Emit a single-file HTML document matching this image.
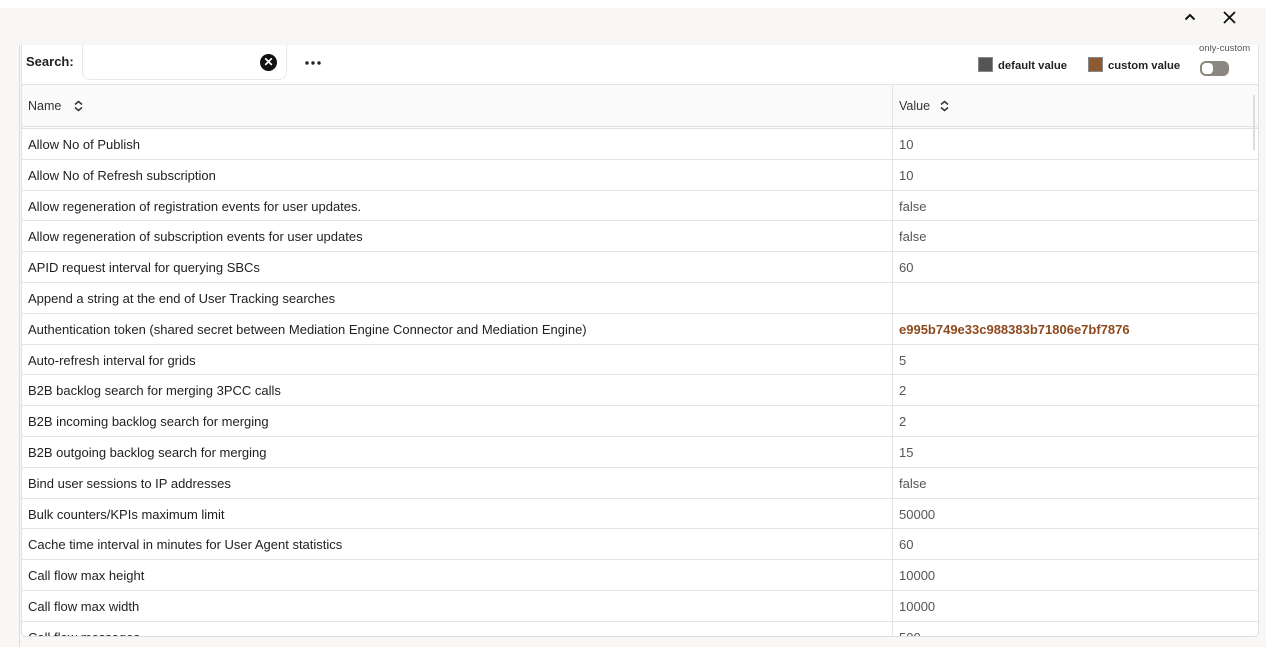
<!DOCTYPE html>
<html><head><meta charset="utf-8"><style>
*{box-sizing:border-box;margin:0;padding:0}
body{width:1273px;height:647px;background:#fff;font-family:"Liberation Sans",Arial,sans-serif;position:relative;overflow:hidden}
.top{position:absolute;left:0;top:8px;width:1266px;height:639px;background:#f8f7f5}
.lline{position:absolute;left:19px;top:45px;width:1px;height:602px;background:#ddd}
.panel{position:absolute;left:21px;top:45px;width:1238px;height:592px;background:#fff;border:1px solid #e0e0e0;border-top:none;border-radius:0 0 5px 5px;overflow:hidden}
.bar{height:40px;position:relative;border-bottom:1px solid #e4e4e4}
.slabel{position:absolute;left:4px;top:9px;font-weight:bold;font-size:13px;color:#222}
.sbox{position:absolute;left:60px;top:0;width:205px;height:35px;border:1px solid #e8e8e8;border-top:none;border-radius:0 0 8px 8px}
.clr{position:absolute;left:238px;top:9px;width:17px;height:17px;border-radius:50%;background:#111;color:#fff;font-size:12px;line-height:17px;text-align:center;font-weight:bold}
.dots{position:absolute;left:283px;top:16px}
.leg{position:absolute;top:12px;font-size:11.3px;font-weight:bold;color:#222}
.sq{display:inline-block;width:15px;height:15px;vertical-align:-3px;margin-right:5px;border:1px solid #888}
.oc{position:absolute;left:1177px;top:-2px;font-size:9.5px;color:#555}
.tog{position:absolute;left:1178px;top:16px;width:29px;height:15px;border-radius:6px;background:#8b8680}
.tog:after{content:"";position:absolute;left:2px;top:2px;width:11px;height:11px;border-radius:4px;background:#fff}
.hdr{height:44px;background:#fafafa;border-bottom:3px double #e0e0e0;position:relative;font-size:12.5px;color:#333}
.hdr span{position:absolute;top:14px}
.hdr svg{position:absolute;top:15px}
.row{height:30.8px;border-bottom:1px solid #e4e4e4;position:relative;font-size:13px;color:#222}
.row .n{position:absolute;left:6px;top:8px}
.row .v{position:absolute;left:877px;top:8px;color:#555}
.div{position:absolute;left:870px;top:40px;width:1px;height:560px;background:#e4e4e4}
</style></head><body>
<div class="top"></div>
<svg style="position:absolute;left:1184px;top:13px" width="12" height="8" viewBox="0 0 12 8"><path d="M1.5 6.5 L6 2 L10.5 6.5" fill="none" stroke="#111" stroke-width="2"/></svg>
<svg style="position:absolute;left:1223px;top:11px" width="13" height="13" viewBox="0 0 13 13"><path d="M1 1 L12 12 M12 1 L1 12" fill="none" stroke="#111" stroke-width="1.8"/></svg>
<div class="lline"></div>
<div class="panel">
<div class="bar">
<div class="slabel">Search:</div>
<div class="sbox"></div>
<div class="clr">✕</div>
<svg class="dots" width="18" height="4" viewBox="0 0 18 4"><circle cx="2" cy="2" r="1.7" fill="#222"/><circle cx="8" cy="2" r="1.7" fill="#222"/><circle cx="14" cy="2" r="1.7" fill="#222"/></svg>
<div class="leg" style="left:956px"><span class="sq" style="background:#555"></span>default value</div>
<div class="leg" style="left:1066px"><span class="sq" style="background:#8e5a33"></span>custom value</div>
<div class="oc">only-custom</div>
<div class="tog"></div>
</div>
<div class="hdr"><span style="left:6px">Name</span>
<svg style="left:52px" width="9" height="12" viewBox="0 0 9 12"><path d="M1 4.5 L4.5 1.5 L8 4.5 M1 7.5 L4.5 10.5 L8 7.5" fill="none" stroke="#333" stroke-width="1.5"/></svg>
<span style="left:877px">Value</span>
<svg style="left:918px" width="9" height="12" viewBox="0 0 9 12"><path d="M1 4.5 L4.5 1.5 L8 4.5 M1 7.5 L4.5 10.5 L8 7.5" fill="none" stroke="#333" stroke-width="1.5"/></svg>
</div>
<div class="row"><span class="n">Allow No of Publish</span><span class="v">10</span></div>
<div class="row"><span class="n">Allow No of Refresh subscription</span><span class="v">10</span></div>
<div class="row"><span class="n">Allow regeneration of registration events for user updates.</span><span class="v">false</span></div>
<div class="row"><span class="n">Allow regeneration of subscription events for user updates</span><span class="v">false</span></div>
<div class="row"><span class="n">APID request interval for querying SBCs</span><span class="v">60</span></div>
<div class="row"><span class="n">Append a string at the end of User Tracking searches</span><span class="v"></span></div>
<div class="row"><span class="n">Authentication token (shared secret between Mediation Engine Connector and Mediation Engine)</span><span class="v" style="color:#8e4a1e;font-weight:bold">e995b749e33c988383b71806e7bf7876</span></div>
<div class="row"><span class="n">Auto-refresh interval for grids</span><span class="v">5</span></div>
<div class="row"><span class="n">B2B backlog search for merging 3PCC calls</span><span class="v">2</span></div>
<div class="row"><span class="n">B2B incoming backlog search for merging</span><span class="v">2</span></div>
<div class="row"><span class="n">B2B outgoing backlog search for merging</span><span class="v">15</span></div>
<div class="row"><span class="n">Bind user sessions to IP addresses</span><span class="v">false</span></div>
<div class="row"><span class="n">Bulk counters/KPIs maximum limit</span><span class="v">50000</span></div>
<div class="row"><span class="n">Cache time interval in minutes for User Agent statistics</span><span class="v">60</span></div>
<div class="row"><span class="n">Call flow max height</span><span class="v">10000</span></div>
<div class="row"><span class="n">Call flow max width</span><span class="v">10000</span></div>
<div class="row"><span class="n">Call flow messages</span><span class="v">500</span></div>
<div class="div"></div>
<div style="position:absolute;left:1231px;top:50px;width:2px;height:55px;background:#ddd"></div>
</div>
</body></html>
